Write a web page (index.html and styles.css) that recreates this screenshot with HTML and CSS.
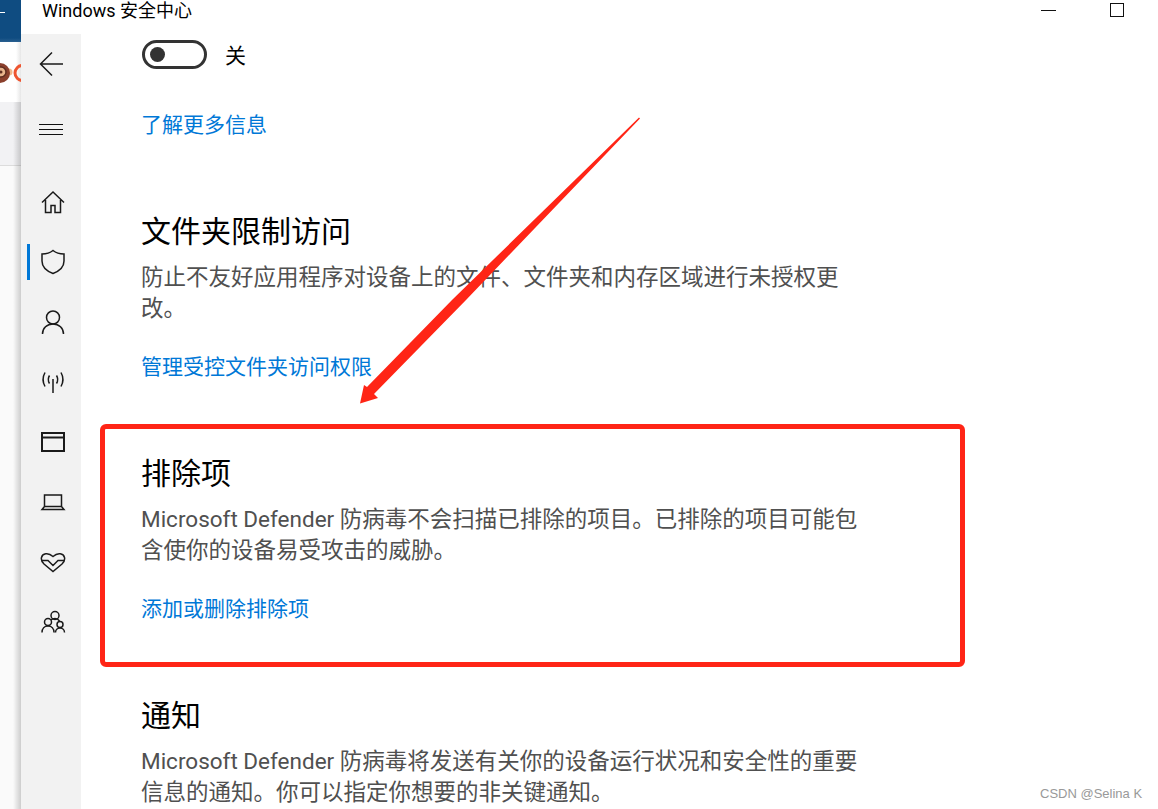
FILE: index.html
```html
<!DOCTYPE html>
<html lang="zh-CN">
<head>
    <meta charset="UTF-8">
    <meta name="viewport" content="width=device-width, initial-scale=1.0">
    <title>Windows 安全中心</title>
    <link rel="stylesheet" href="styles.css">
</head>
<body>
    <div class="behind">
        <div class="behind-bar"><span class="behind-dash"></span></div>
        <div class="behind-logo">
            <svg width="21" height="60" viewBox="0 0 21 60">
                <circle cx="9" cy="30" r="3.500" fill="#f0b98c"/>
                <circle cx="0" cy="31" r="10" fill="#8a3f2c"/>
                <circle cx="1" cy="30" r="5" fill="#e8b48c" stroke="#5e2d20" stroke-width="1.500"/>
                <circle cx="1" cy="30" r="1.500" fill="#5e2d20"/>
                <circle cx="22.500" cy="31" r="7.500" fill="none" stroke="#ee5530" stroke-width="3"/>
            </svg>
        </div>
        <div class="behind-rest"></div>
    </div>

    <div class="window">
        <header class="titlebar">
            <span class="title">Windows 安全中心</span>
            <div class="controls">
                <span class="min"></span>
                <span class="max"></span>
            </div>
        </header>

        <div class="app">
            <nav class="nav">
                <div class="nav-item back">
                    <svg width="24" height="26" viewBox="0 0 24 26"><path d="M24 13H1.500M13 1.500 1.500 13 13 24.500"/></svg>
                </div>
                <div class="burger">
                    <span></span><span></span><span></span>
                </div>
                <div class="nav-item">
                    <svg width="26" height="26" viewBox="0 0 26 26"><path d="M2 13.500 13 3l11 10.500M5.500 11v12.500h5.500v-7h4v7h5.500V11"/></svg>
                </div>
                <div class="nav-item active">
                    <svg width="26" height="26" viewBox="0 0 26 26"><path d="M13 1.500C10 4 6 5 2 5v7c0 6 4.500 10 11 12.500C19.500 22 24 18 24 12V5c-4 0-8-1-11-3.500Z"/></svg>
                </div>
                <div class="nav-item">
                    <svg width="26" height="26" viewBox="0 0 26 26"><circle cx="13" cy="8.500" r="6.500"/><path d="M2.500 25C2.500 19 7 15 13 15s10.500 4 10.500 10"/></svg>
                </div>
                <div class="nav-item">
                    <svg width="26" height="26" viewBox="0 0 26 26"><path d="M13 10v14M9.500 6.500c-1.500 2.500-1.500 5.500 0 8M16.500 6.500c1.500 2.500 1.500 5.500 0 8M5 3.500c-2.500 4.500-2.500 9.500 0 14M21 3.500c2.500 4.500 2.500 9.500 0 14"/></svg>
                </div>
                <div class="nav-item">
                    <svg width="26" height="26" viewBox="0 0 26 26"><path class="thick" d="M2 4h22v18H2ZM2 8.500h22"/></svg>
                </div>
                <div class="nav-item">
                    <svg width="26" height="26" viewBox="0 0 26 26"><path d="M4.500 17.500V6h17v11.500M4.500 17.500 2 20.500h22l-2.500-3Z"/></svg>
                </div>
                <div class="nav-item">
                    <svg width="26" height="26" viewBox="0 0 26 26"><path d="M4 15C1.500 12.500 1 10.500 1.500 8.500 2.500 4.500 8 3 13 7.500 18 3 23.500 4.500 24.500 8.500 25 10.500 24.500 12.500 22 15l-9 7.500Z"/><path d="M1.500 11.500H8l5 5 5-5h6.500"/></svg>
                </div>
                <div class="nav-item">
                    <svg width="26" height="26" viewBox="0 0 26 26"><circle cx="15" cy="6.500" r="4"/><circle cx="8" cy="13" r="3.500"/><circle cx="20" cy="15.500" r="3"/><path d="M2 23.500c0-4 2.500-6.500 6-6.500s6 2.500 6 6.500M15.500 23.500c0-2.500 2-4.500 4.500-4.500s4.500 2 4.500 4.500M11 11c1-1 2.500-1.500 4-1.500 2 0 3.500 1 4.500 2.500"/></svg>
                </div>
            </nav>

            <main class="content">
                <div class="toggle-row">
                    <span class="toggle"><span class="knob"></span></span>
                    <span class="toggle-label">关</span>
                </div>
                <a class="link first-link">了解更多信息</a>

                <section class="group">
                    <h2>文件夹限制访问</h2>
                    <p>防止不友好应用程序对设备上的文件、文件夹和内存区域进行未授权更改。</p>
                    <a class="link">管理受控文件夹访问权限</a>
                </section>

                <section class="group">
                    <h2>排除项</h2>
                    <p>Microsoft Defender 防病毒不会扫描已排除的项目。已排除的项目可能包含使你的设备易受攻击的威胁。</p>
                    <a class="link">添加或删除排除项</a>
                </section>

                <section class="group">
                    <h2>通知</h2>
                    <p>Microsoft Defender 防病毒将发送有关你的设备运行状况和安全性的重要信息的通知。你可以指定你想要的非关键通知。</p>
                </section>
            </main>
        </div>
    </div>

    <!-- annotations drawn on top of the screenshot -->
    <div class="red-box"></div>
    <svg class="red-arrow" width="1158" height="809" viewBox="0 0 1158 809">
        <polygon points="639,117.500 640,118.500 466,300 374,394 378,398 360,403.500 364,385 367,387 452,300"/>
    </svg>
    <div class="watermark">CSDN @Selina K</div>
</body>
</html>
```

FILE: styles.css
```css
body {
    margin: 0;
    display: flex;
    height: 809px;
    overflow: hidden;
    background-color: #fff;
    color: #000;
    font-family: Roboto, "Noto Sans CJK SC", sans-serif;
}

/* the other window peeking out on the left */
.behind {
    width: 21px;
    flex-shrink: 0;
    display: flex;
    flex-direction: column;
}
.behind-bar {
    height: 42px;
    background: linear-gradient(to bottom, #0f4c81 0, #0f4c81 38px, #2a6090 42px);
    position: relative;
}
.behind-dash {
    position: absolute;
    top: 12px;
    left: 0;
    width: 5px;
    height: 1px;
    background-color: #fff;
}
.behind-logo {
    height: 60px;
    background: linear-gradient(to right, #fff 16px, #e6e6e6 21px);
}
.behind-rest {
    flex: 1;
    background:
        linear-gradient(to right, rgba(0, 0, 0, 0) 13px, rgba(0, 0, 0, 0.18) 21px),
        linear-gradient(#dcdcdc, #dcdcdc) 0 63px / 100% 1px no-repeat,
        linear-gradient(to bottom, #f2f2f4 63px, #fafafa 64px);
}

.window {
    flex: 1;
    display: flex;
    flex-direction: column;
    min-width: 0;
}
.titlebar {
    height: 34px;
    flex-shrink: 0;
    display: flex;
    justify-content: space-between;
    padding-left: 21px;
}
.title {
    font-size: 18px;
    line-height: 21px;
}
.controls {
    display: flex;
    gap: 54px;
    padding-right: 34px;
    padding-top: 3px;
}
.min {
    width: 15px;
    height: 1px;
    margin-top: 7px;
    background-color: #111;
}
.max {
    width: 12px;
    height: 12px;
    border: 1px solid #111;
}

.app {
    flex: 1;
    display: flex;
    min-height: 0;
}
.nav {
    width: 60px;
    flex-shrink: 0;
    background-color: #f2f2f2;
    display: flex;
    flex-direction: column;
}
.nav-item {
    height: 60px;
    display: flex;
    align-items: center;
    justify-content: center;
    position: relative;
    padding-left: 4px;
}
.nav-item svg {
    fill: none;
    stroke: #1a1a1a;
    stroke-width: 1.5;
}
.nav-item .thick {
    stroke-width: 2;
}
.back {
    padding-left: 0;
}
.burger {
    display: flex;
    flex-direction: column;
    align-items: center;
    gap: 4px;
    margin: 30px 0 37px;
}
.burger span {
    width: 24px;
    height: 1px;
    background-color: #111;
}
.active::before {
    content: "";
    position: absolute;
    left: 6px;
    top: 12px;
    width: 3px;
    height: 36px;
    background-color: #0078d7;
}

.content {
    flex: 1;
    padding-left: 60px;
    min-width: 0;
    overflow: hidden;
}
.toggle-row {
    display: flex;
    gap: 18px;
    height: 29px;
    margin-top: 6px;
    margin-left: 1px;
}
.toggle {
    box-sizing: border-box;
    width: 65px;
    height: 29px;
    border: 3px solid #333;
    border-radius: 15px;
    display: flex;
    align-items: center;
    padding-left: 5px;
}
.knob {
    width: 15px;
    height: 15px;
    border-radius: 50%;
    background-color: #333;
}
.toggle-label {
    margin-top: 2px;
    font-size: 21px;
    line-height: 29px;
}
.link {
    display: block;
    color: #0078d7;
    font-size: 21px;
    line-height: 30px;
}
.first-link {
    margin-top: 41px;
}
.group {
    margin-top: 71px;
    height: 171px;
}
h2 {
    margin: 0;
    font-size: 30px;
    font-weight: 400;
    line-height: 42px;
}
.group p {
    margin: 9px 0 0;
    width: 718px;
    color: #505050;
    font-size: 22.5px;
    line-height: 31px;
}
.group .link {
    margin-top: 28px;
}

.red-box {
    position: absolute;
    left: 100px;
    top: 424px;
    width: 855px;
    height: 233px;
    border: 5px solid #ff2516;
    border-radius: 6px;
}
.red-arrow {
    position: absolute;
    left: 0;
    top: 0;
    pointer-events: none;
}
.red-arrow polygon {
    fill: #ff2516;
}
.watermark {
    position: absolute;
    left: 1040px;
    top: 786px;
    color: #999;
    font-family: "Liberation Sans", sans-serif;
    font-size: 13px;
    line-height: 16px;
}
```
